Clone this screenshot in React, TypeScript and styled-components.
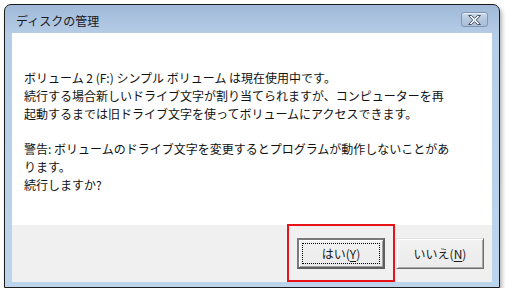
import React from "react";
import styled, { createGlobalStyle } from "styled-components";

const GlobalStyle = createGlobalStyle`
  html, body {
    margin: 0;
    padding: 0;
    background: #ffffff;
  }
  body {
    font-family: "Noto Sans CJK JP", "Noto Sans", sans-serif;
    font-size: 12px;
    color: #000;
  }
`;

// window frame

const Window = styled.div`
  margin: 4px 0 0 4px;
  width: 496px;
  height: 284px;
  box-sizing: border-box;
  border: 1px solid #1c1c1c;
  border-radius: 7px 7px 0 0;
  background: linear-gradient(#9fb9d7, #b6cde7 30px, #bcd4ec);
  box-shadow: 0 1px 0 #47c5dc, 2px 3px 4px rgba(0, 0, 0, 0.3);
  display: flex;
  flex-direction: column;
`;

const TitleBar = styled.div`
  height: 28px;
  display: flex;
  align-items: center;
  justify-content: space-between;
  padding: 0 11px 0 11px;
`;

const Title = styled.span`
  font-size: 12px;
  color: #1a1a1a;
  padding-top: 3px;
`;

const CloseButton = styled.div`
  width: 27px;
  height: 15px;
  margin-top: 1px;
  box-sizing: border-box;
  border: 1px solid #8196b2;
  border-radius: 3px;
  background: linear-gradient(#cad8ea, #b2c6dd 55%, #a9bfd9);
  box-shadow: inset 0 1px 0 rgba(255, 255, 255, 0.55);
  display: flex;
  align-items: center;
  justify-content: center;
`;

const Client = styled.div`
  flex: 1;
  margin: 0 7px 5px 7px;
  display: flex;
  flex-direction: column;
  background: #ffffff;
`;

const Message = styled.div`
  flex: 1;
  padding: 36px 12px 0 12px;
  line-height: 18px;
  white-space: nowrap;
  color: #111;
`;

const Paragraph = styled.p`
  margin: 0 0 17px 0;
`;

const Footer = styled.div`
  height: 57px;
  background: #f0f0f0;
  display: flex;
  align-items: center;
  justify-content: flex-end;
  gap: 11px;
  padding-right: 8px;
`;

const Highlight = styled.div`
  position: relative;
  display: flex;
`;

const RedBox = styled.div`
  position: absolute;
  top: -14px;
  left: -10px;
  right: -10px;
  bottom: -13px;
  border: 2px solid #e8131a;
  pointer-events: none;
`;

const Button = styled.button<{ $default?: boolean }>`
  position: relative;
  width: 88px;
  height: 31px;
  box-sizing: border-box;
  font-family: "Noto Sans CJK JP", "Noto Sans", sans-serif;
  font-size: 12px;
  color: #1a1a1a;
  padding: 0;
  background: linear-gradient(#f2f2f2, #ebebeb);
  border: ${(p) => (p.$default ? "2px solid #6a6a6a" : "1px solid #6e6e6e")};
  border-color: ${(p) =>
    p.$default ? "#7a7a7a #5e5e5e #5e5e5e #7a7a7a" : "#e2e2e2 #6e6e6e #6e6e6e #e2e2e2"};
  box-shadow: ${(p) =>
    p.$default
      ? "inset 1px 1px 0 #ffffff, inset -1px -1px 0 #a0a0a0"
      : "inset 1px 1px 0 #ffffff, inset -1px -1px 0 #a8a8a8"};

  &::after {
    content: "";
    display: ${(p) => (p.$default ? "block" : "none")};
    position: absolute;
    inset: 3px;
    border: 1px dotted #000;
  }

  u {
    text-underline-offset: 2px;
  }
`;

function CloseIcon() {
  return (
    <svg width="13" height="10" viewBox="0 0 13 10">
      <polygon
        points="0.5,0.5 3.5,0.5 6.5,3.3 9.5,0.5 12.5,0.5 8.3,5 12.5,9.5 9.5,9.5 6.5,6.7 3.5,9.5 0.5,9.5 4.7,5"
        fill="#eef2f7"
        stroke="#4d5665"
        strokeWidth="1"
        strokeLinejoin="round"
      />
    </svg>
  );
}

export default function App() {
  return (
    <>
      <GlobalStyle />
      <Window>
        <TitleBar>
          <Title>ディスクの管理</Title>
          <CloseButton>
            <CloseIcon />
          </CloseButton>
        </TitleBar>
        <Client>
          <Message>
            <Paragraph>
              ボリューム 2 (F:) シンプル ボリューム は現在使用中です。
              <br />
              続行する場合新しいドライブ文字が割り当てられますが、コンピューターを再
              <br />
              起動するまでは旧ドライブ文字を使ってボリュームにアクセスできます。
            </Paragraph>
            <Paragraph>
              警告: ボリュームのドライブ文字を変更するとプログラムが動作しないことがあ
              <br />
              ります。
              <br />
              続行しますか?
            </Paragraph>
          </Message>
          <Footer>
            <Highlight>
              <Button $default>
                はい(<u>Y</u>)
              </Button>
              <RedBox />
            </Highlight>
            <Button>
              いいえ(<u>N</u>)
            </Button>
          </Footer>
        </Client>
      </Window>
    </>
  );
}
